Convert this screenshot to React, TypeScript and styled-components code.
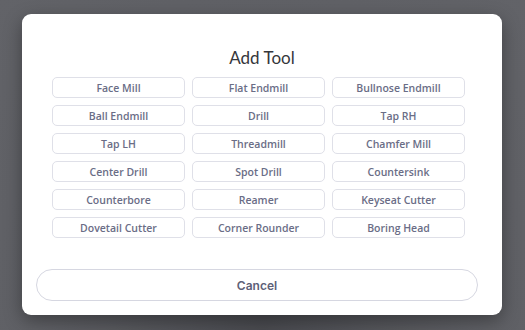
import styled, { createGlobalStyle } from "styled-components";

const tools = [
  "Face Mill",
  "Flat Endmill",
  "Bullnose Endmill",
  "Ball Endmill",
  "Drill",
  "Tap RH",
  "Tap LH",
  "Threadmill",
  "Chamfer Mill",
  "Center Drill",
  "Spot Drill",
  "Countersink",
  "Counterbore",
  "Reamer",
  "Keyseat Cutter",
  "Dovetail Cutter",
  "Corner Rounder",
  "Boring Head",
];

const GlobalStyle = createGlobalStyle`
  html, body {
    margin: 0;
    padding: 0;
    background: #5f6065;
  }
  * {
    box-sizing: border-box;
  }
`;

const Overlay = styled.div`
  width: 525px;
  height: 330px;
  padding: 14px 23px 0 22px;
  background: radial-gradient(ellipse at 50% 100%, #4a4b50 0%, #5f6065 60%, #626368 100%);
  overflow: hidden;
`;

const Modal = styled.div`
  width: 480px;
  height: 301px;
  background: #ffffff;
  border-radius: 9px;
  box-shadow: 0 6px 18px rgba(0, 0, 0, 0.35);
  display: flex;
  flex-direction: column;
  align-items: flex-start;
  padding: 34px 0 0;
`;

const Title = styled.h2`
  align-self: center;
  margin: 0;
  font-family: "Lato", "Open Sans", sans-serif;
  font-weight: 400;
  font-size: 17px;
  line-height: 20px;
  color: #35363b;
`;

const Grid = styled.div`
  margin: 9px 0 0 30px;
  display: grid;
  grid-template-columns: repeat(3, 133px);
  grid-auto-rows: 21px;
  column-gap: 7px;
  row-gap: 7px;
`;

const ToolButton = styled.button`
  margin: 0;
  padding: 0;
  background: #ffffff;
  border: 1px solid #dfe0e8;
  border-radius: 5px;
  font-family: "Open Sans", "Noto Sans", sans-serif;
  font-weight: 600;
  font-size: 10.5px;
  color: #6a6d86;
  cursor: pointer;
`;

const CancelButton = styled.button`
  margin: 31px 0 0 14px;
  width: 442px;
  height: 32px;
  background: #ffffff;
  border: 1px solid #d6d7e1;
  border-radius: 16px;
  font-family: "Inter", "Liberation Sans", sans-serif;
  font-weight: 600;
  font-size: 12px;
  color: #5e6178;
  cursor: pointer;
`;

export default function App() {
  return (
    <>
      <GlobalStyle />
      <Overlay>
        <Modal>
          <Title>Add Tool</Title>
          <Grid>
            {tools.map((t) => (
              <ToolButton key={t}>{t}</ToolButton>
            ))}
          </Grid>
          <CancelButton>Cancel</CancelButton>
        </Modal>
      </Overlay>
    </>
  );
}
